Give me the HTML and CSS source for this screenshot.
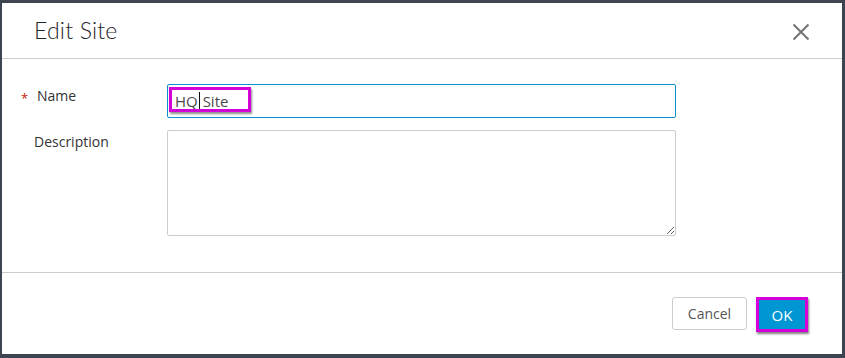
FILE: index.html
```html
<!DOCTYPE html>
<html>
<head>
<meta charset="utf-8">
<link rel="stylesheet" href="styles.css">
</head>
<body>
<div class="dialog">
  <div class="header">
    <h1 class="title">Edit Site</h1>
    <button class="close" aria-label="Close">
      <svg width="18" height="18" viewBox="0 0 18 18"><path d="M1.5 1.5 L16.5 16.5 M16.5 1.5 L1.5 16.5" stroke="#737373" stroke-width="2" fill="none"/></svg>
    </button>
  </div>
  <div class="body">
    <div class="row">
      <label class="label required">Name</label>
      <div class="field input">
        <span class="value">HQ<span class="caret"></span> Site</span>
        <span class="highlight"></span>
      </div>
    </div>
    <div class="row">
      <label class="label">Description</label>
      <textarea class="field textarea"></textarea>
    </div>
  </div>
  <div class="footer">
    <button class="btn cancel">Cancel</button>
    <button class="btn ok">OK</button>
  </div>
</div>
</body>
</html>
```
FILE: styles.css
```css
html, body {
  margin: 0;
  padding: 0;
}
body {
  background: #3c4550;
  width: 845px;
  height: 358px;
  overflow: hidden;
  padding: 3px 3px 4px 2px;
  box-sizing: border-box;
}
.dialog {
  background: #fff;
  width: 840px;
  height: 351px;
  display: flex;
  flex-direction: column;
  font-family: "Open Sans", sans-serif;
  color: #333;
}
.header {
  height: 56px;
  border-bottom: 1px solid #ccc;
  display: flex;
  align-items: center;
  justify-content: space-between;
  padding: 0 32px 0 32px;
  box-sizing: border-box;
  flex: none;
}
.title {
  margin: 0;
  font-family: "Lato", sans-serif;
  font-weight: 300;
  font-size: 23px;
  color: #1f2428;
  line-height: 28px;
  padding-bottom: 2px;
  letter-spacing: 0.2px;
}
.close {
  border: 0;
  background: none;
  padding: 0;
  width: 18px;
  height: 18px;
  margin-top: 2px;
  display: flex;
}
.body {
  flex: 1;
  padding: 25px 0 0 0;
  display: flex;
  flex-direction: column;
  gap: 12px;
}
.row {
  display: flex;
  align-items: flex-start;
}
.label {
  width: 133px;
  padding-left: 32px;
  padding-top: 2px;
  font-size: 14px;
  line-height: 20px;
  color: #333;
  position: relative;
  flex: none;
}
.label.required {
  padding-left: 35px;
  width: 130px;
}
.label.required::before {
  content: "*";
  position: absolute;
  left: 19px;
  top: 4px;
  color: #c92100;
  font-size: 13px;
}
.field {
  width: 509px;
  box-sizing: border-box;
  flex: none;
}
.input {
  height: 34px;
  border: 1px solid #0b8fd3;
  border-radius: 2px;
  position: relative;
  padding: 0 7px;
  display: flex;
  align-items: center;
}
.value {
  font-size: 15px;
  color: #4a4a4a;
  line-height: 20px;
  position: relative;
}
.caret {
  display: inline-block;
  width: 1px;
  height: 19px;
  background: #111;
  vertical-align: -4px;
  margin-left: 1px;
  margin-right: -1px;
}
.highlight {
  position: absolute;
  left: 1px;
  top: 2px;
  width: 82px;
  height: 25px;
  box-sizing: border-box;
  border: 3px solid #d400d8;
  box-shadow: 1px 2px 2px rgba(0,0,0,0.45);
}
.textarea {
  height: 106px;
  border: 1px solid #ccc;
  border-radius: 2px;
  margin: 0;
  padding: 0;
  font-family: "Open Sans", sans-serif;
  resize: both;
  outline: none;
  display: block;
}
.footer {
  height: 82px;
  border-top: 1px solid #ccc;
  box-sizing: border-box;
  display: flex;
  justify-content: flex-end;
  align-items: flex-start;
  padding: 24px 34px 0 0;
  gap: 9px;
  flex: none;
}
.btn {
  font-family: "Open Sans", sans-serif;
  font-size: 14px;
  cursor: pointer;
}
.cancel {
  width: 75px;
  height: 33px;
  background: #fff;
  border: 1px solid #ccc;
  border-radius: 3px;
  color: #565656;
  padding: 0;
}
.ok {
  width: 52px;
  height: 35px;
  background: #0095d3;
  border: 3px solid #d400d8;
  color: #fff;
  font-size: 15px;
  padding: 0;
  box-shadow: 1px 2px 2px rgba(0,0,0,0.5);
}
```
